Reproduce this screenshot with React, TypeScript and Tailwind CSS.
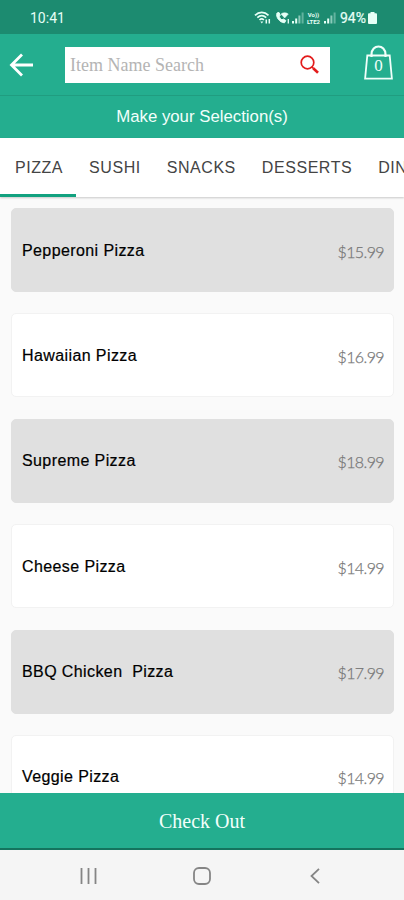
import React from 'react';

const tabs = ['PIZZA', 'SUSHI', 'SNACKS', 'DESSERTS', 'DINNER'];

const items = [
	{ name: 'Pepperoni Pizza', price: '$15.99' },
	{ name: 'Hawaiian Pizza', price: '$16.99' },
	{ name: 'Supreme Pizza', price: '$18.99' },
	{ name: 'Cheese Pizza', price: '$14.99' },
	{ name: 'BBQ Chicken  Pizza', price: '$17.99' },
	{ name: 'Veggie Pizza', price: '$14.99' },
];

const SignalIcon = () => (
	<svg width="13" height="13" viewBox="0 0 13 13" fill="currentColor">
		<rect x="0" y="10" width="2" height="2.5" />
		<rect x="3.2" y="7.5" width="2" height="5" />
		<rect x="6.4" y="4.5" width="2" height="8" opacity=".55" />
		<rect x="9.6" y="1.5" width="2" height="11" opacity=".35" />
	</svg>
);

const StatusBar = () => (
	<div className="flex h-[34px] shrink-0 items-center justify-between bg-[#1c8b70] pl-[30px] pr-[27px] pt-px font-['Roboto',sans-serif] text-sm text-[#e6fff6]">
		<span>10:41</span>
		<div className="flex items-center">
			{/* wifi */}
			<svg width="18" height="14" viewBox="0 0 18 14" fill="none" stroke="currentColor" strokeWidth="1.7">
				<path d="M1 4.3C5 .5 10.5 .5 14.5 4.3M3.3 6.7c2.7-2.5 6.2-2.5 8.9 0M5.5 9c1.4-1.3 3-1.3 4.400 0" />
				<path d="M6.3 10.5h3l-1.500 2z" fill="currentColor" stroke="none" />
				<path d="M12.3 12.5V8.5M15.3 8v4.5" strokeWidth="1.5" />
			</svg>
			{/* wifi call */}
			<svg className="ml-[3px]" width="15" height="14" viewBox="0 0 15 14" fill="none" stroke="currentColor">
				<path d="M2 2c-1.500 4 2.500 9.500 7.500 9.800l1.300-2.300-2.600-1.500-1.200 1C5.500 8 4.500 6.500 4.300 5.200l1-1L4 1.500z" fill="currentColor" />
				<path d="M6 3c2.300-1.700 5-1.700 7.300 0L9.700 7z" fill="currentColor" strokeWidth=".5" />
				<path d="M13.3 8v4.500" strokeWidth="1.3" />
			</svg>
			<div className="ml-0.5">
				<SignalIcon />
			</div>
			<div className="flex w-[17px] flex-col items-center text-[6px] font-bold leading-[7px]">
				<span>Vo))</span>
				<span>LTE2</span>
			</div>
			<div className="ml-0.5">
				<SignalIcon />
			</div>
			<span className="ml-[3px] [-webkit-text-stroke:0.2px_#e6fff6]">94%</span>
			<svg className="ml-0.5" width="9" height="12" viewBox="0 0 9 12" fill="currentColor">
				<rect x="2.5" width="4" height="2" />
				<rect y="1.3" width="9" height="10.7" rx="1" />
			</svg>
		</div>
	</div>
);

const Header = () => (
	<div className="flex h-[62px] shrink-0 items-center border-b border-[#209d80] bg-[#24ae8f] pl-[9px] pr-[11px]">
		<svg width="24" height="24" viewBox="0 0 24 24" fill="none" stroke="#fff" strokeWidth="2.8">
			<path d="M24 12H2.5M13 1.5 2.5 12 13 22.5" />
		</svg>
		<div className="ml-8 flex h-9 w-[265px] items-center justify-between bg-white pl-[5px] pr-[11px]">
			<span className="whitespace-nowrap font-['Liberation_Serif',serif] text-[18px] leading-none text-[#b4b4b4]">
				Item Name Search
			</span>
			<svg width="19" height="19" viewBox="0 0 19 19" fill="none" stroke="#e31b1b">
				<circle cx="7.5" cy="7.5" r="6.3" strokeWidth="1.7" />
				<path d="m12 12 1.5 1.5" strokeWidth="1.7" />
				<path d="m13.2 13.2 4.8 4.6" strokeWidth="2.6" />
			</svg>
		</div>
		<svg className="-mt-[5px] ml-auto" width="29" height="35" viewBox="0 0 29 35" fill="none" stroke="#f0fffa" strokeWidth="1.8">
			<path d="M3.3 10.5h22.4l2.200 23.200H1.1z" />
			<path d="M7.5 12V9.5C7.5-1.200 21.5-1.200 21.5 9.500V12" strokeWidth="2.2" />
			<text x="14.5" y="26" textAnchor="middle" fontFamily="Liberation Serif, serif" fontSize="17" fill="#f0fffa" stroke="none">
				0
			</text>
		</svg>
	</div>
);

const ItemCard = ({ name, price, shaded }) => (
	<div
		className={`flex h-[84px] shrink-0 items-center justify-between rounded-[5px] border px-[9px] ${
			shaded ? 'border-[#e0e0e0] bg-[#e0e0e0]' : 'border-[#f2f2f2] bg-white'
		}`}
	>
		<span className="whitespace-pre pl-px pt-px font-['Liberation_Sans',sans-serif] text-base tracking-[0.4px] text-black [-webkit-text-stroke:0.2px_#000]">
			{name}
		</span>
		<span className="pt-[3px] font-['Lato',sans-serif] text-base font-light tracking-[-0.6px] text-[#777] [-webkit-text-stroke:0.25px_#777]">
			{price}
		</span>
	</div>
);

const NavBar = () => (
	<div className="flex h-[50px] shrink-0 items-center bg-[#f5f5f5] pl-[80px] pt-[2px]">
		<svg width="17" height="16" viewBox="0 0 17 16" stroke="#858585" strokeWidth="1.8">
			<path d="M1.5 0v16M8.5 0v16M15.5 0v16" />
		</svg>
		<svg className="ml-24" width="18" height="18" viewBox="0 0 18 18" fill="none" stroke="#858585" strokeWidth="1.8">
			<rect x="1" y="1" width="16" height="16" rx="5" />
		</svg>
		<svg className="ml-[99px]" width="10" height="16" viewBox="0 0 10 16" fill="none" stroke="#858585" strokeWidth="1.8">
			<path d="M9 .8 1.5 8 9 15.2" />
		</svg>
	</div>
);

export default function App() {
	return (
		<div className="flex h-[900px] w-[404px] flex-col overflow-hidden bg-[#fafafa]">
			<StatusBar />
			<Header />
			<div className="flex h-[42px] shrink-0 items-center justify-center bg-[#24ae8f] font-['Liberation_Sans',sans-serif] text-[16.8px] text-[#f2fffb]">
				Make your Selection(s)
			</div>
			<div className="flex h-[59px] shrink-0 overflow-hidden bg-white shadow-[0_1px_2px_rgba(0,0,0,0.2)]">
				{tabs.map((tab, index) => (
					<div
						key={tab}
						className={`flex shrink-0 items-center border-b-[3px] pr-[13px] pt-[3px] font-['Liberation_Sans',sans-serif] text-base tracking-[0.55px] text-[#444] ${
							index === 0 ? 'border-[#12a17f] pl-[15px]' : 'border-transparent pl-[13px]'
						}`}
					>
						{tab}
					</div>
				))}
			</div>
			<div className="flex min-h-0 flex-1 flex-col gap-[21.4px] overflow-hidden pl-[11px] pr-[10px] pt-[11px]">
				{items.map((item, index) => (
					<ItemCard key={item.name} name={item.name} price={item.price} shaded={index % 2 === 0} />
				))}
			</div>
			<div className="flex h-[57px] shrink-0 items-center justify-center border-b-2 border-[#14745e] bg-[#24ae8f] font-['Liberation_Serif',serif] text-xl text-[#f2fffb]">
				Check Out
			</div>
			<NavBar />
		</div>
	);
}
